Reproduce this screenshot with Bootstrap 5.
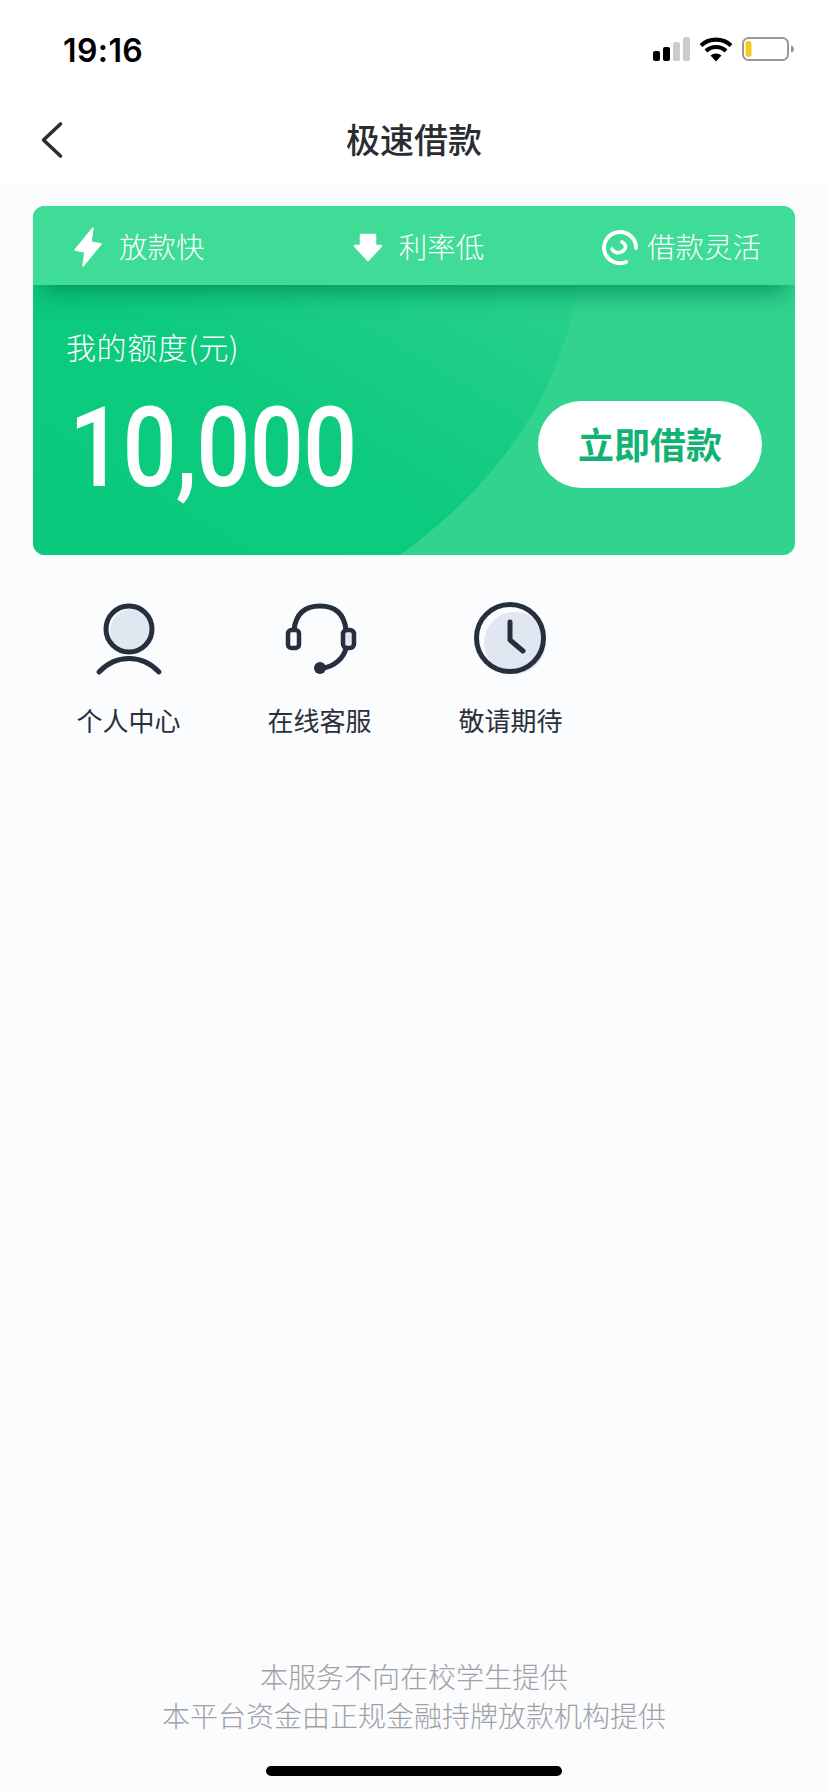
<!DOCTYPE html>
<html lang="zh-CN">
<head>
    <meta charset="UTF-8">
    <meta name="viewport" content="width=device-width, initial-scale=1.0">
    <title>极速借款</title>
    <link href="https://cdn.jsdelivr.net/npm/bootstrap@5.3.0/dist/css/bootstrap.min.css" rel="stylesheet">
    <style>
        body {
            margin: 0;
            background: #fafcfe;
            font-family: "Noto Sans CJK SC", "Noto Sans", sans-serif;
            color: #2b3038;
        }
        .page-wrap { min-height: 1792px; width: 828px; }
        .top-head { background: #fff; height: 184px; }
        .status-row { height: 98px; padding: 0 34px 0 63px; }
        .status-time { font-family: Inter, sans-serif; font-weight: 600; font-size: 32px; letter-spacing: .4px; color: #000; line-height: 1; padding-top: 4px; }
        .nav-row { height: 86px; padding-bottom: 4px; }
        .back-btn { left: 38px; top: 22px; }
        .page-title { font-size: 34px; font-weight: 500; line-height: 1; margin: 0; color: #2b2d30; }
        .quota-box { margin: 22px 33px 0; height: 349px; border-radius: 12px; overflow: hidden; background: #31d38f; color: #fff; }
        .quota-bg { left: 0; top: 0; }
        .perk-strip { height: 79px; background: #3fdc98; padding: 2px 34px 0 40px; box-shadow: 0 14px 24px -8px rgba(0, 140, 85, .9); }
        .perk-item { flex: 1 1 0; font-size: 28.5px; line-height: 1; white-space: nowrap; font-weight: 300; }
        .perk-mid { padding-left: 3px; }
        .quota-body { padding: 0 33px; height: 270px; }
        .quota-label { font-size: 30px; letter-spacing: .6px; line-height: 40px; padding-top: 41px; font-weight: 300; }
        .quota-num { font-family: Roboto, sans-serif; font-weight: 500; font-size: 111px; line-height: 1; margin: 27px 0 0 3px; transform: scaleX(.86); transform-origin: left center; letter-spacing: -1px; }
        .apply-btn { width: 224px; height: 87px; border-radius: 44px; background: #fff; color: #12b275; font-size: 36px; font-weight: 700; line-height: 1; margin-top: 116px; padding: 0 0 4px; }
        .tool-row { margin: 45px 0 0 33px; }
        .tool-item { width: 191px; }
        .tool-name { font-size: 26px; line-height: 36px; margin-top: 22px; color: #2b3038; font-weight: 400; }
        .foot-note { font-size: 28px; line-height: 39px; color: #9fa1a4; font-weight: 300; }
        .home-bar { width: 296px; height: 10px; border-radius: 5px; background: #000; margin: 31px auto 16px; }
    </style>
</head>
<body>
    <div class="page-wrap d-flex flex-column">
        <div class="top-head">
            <div class="status-row d-flex align-items-center justify-content-between">
                <span class="status-time">19:16</span>
                <svg width="142" height="26" viewBox="0 0 142 26">
                    <rect x="1" y="15" width="7" height="10" rx="2" fill="#000"/>
                    <rect x="11" y="11" width="7" height="14" rx="2" fill="#000"/>
                    <rect x="21" y="6" width="7" height="19" rx="2" fill="#ccc"/>
                    <rect x="31" y="1" width="7" height="24" rx="2" fill="#ccc"/>
                    <path d="M49 9.5a22 22 0 0 1 30 0" fill="none" stroke="#000" stroke-width="4.2"/>
                    <path d="M54 15a14.500 14.500 0 0 1 20 0" fill="none" stroke="#000" stroke-width="4.2"/>
                    <path d="M58.5 19.6a8 8 0 0 1 11 0L64 25.5z" fill="#000"/>
                    <rect x="91" y="2" width="45" height="22" rx="5.5" fill="#fff" stroke="#999" stroke-width="2"/>
                    <rect x="93.5" y="5" width="6" height="16" rx="3" fill="#f7c81f"/>
                    <path d="M139 9.5c2.5.6 3 2 3 3.500s-.5 3-3 3.500z" fill="#999"/>
                </svg>
            </div>
            <div class="nav-row position-relative d-flex align-items-center justify-content-center">
                <svg class="back-btn position-absolute" width="28" height="40" viewBox="0 0 28 40">
                    <path d="M22.500 4 5.500 20l17 16" fill="none" stroke="#2b2d30" stroke-width="3.600" stroke-linecap="round" stroke-linejoin="round"/>
                </svg>
                <h1 class="page-title">极速借款</h1>
            </div>
        </div>

        <div class="quota-box position-relative">
            <svg class="quota-bg position-absolute" width="762" height="349" viewBox="0 0 762 349">
                <defs>
                    <linearGradient id="quotaGrad" x1="0.15" y1="0.9" x2="0.95" y2="0.05">
                        <stop offset="0" stop-color="#0bc97d"/>
                        <stop offset=".35" stop-color="#0cca7e"/>
                        <stop offset="1" stop-color="#2fd28e"/>
                    </linearGradient>
                </defs>
                <path d="M367 349C455 285 525 200 545 80V0H0V349z" fill="url(#quotaGrad)"/>
            </svg>
            <div class="perk-strip position-relative d-flex align-items-center">
                <div class="perk-item d-flex align-items-center justify-content-start">
                    <svg width="30" height="42" viewBox="0 0 30 42" class="me-3">
                        <path d="M20 2 2 24l10 2-2 14L28 18l-10-2z" fill="#fff" stroke="#fff" stroke-width="1.500" stroke-linejoin="round"/>
                    </svg>
                    <span>放款快</span>
                </div>
                <div class="perk-item perk-mid d-flex align-items-center justify-content-center">
                    <svg width="30" height="30" viewBox="0 0 30 30" class="me-3">
                        <path d="M8 3h14v11h6L15 28 2 14h6z" fill="#fff" stroke="#fff" stroke-width="2.500" stroke-linejoin="round"/>
                    </svg>
                    <span>利率低</span>
                </div>
                <div class="perk-item d-flex align-items-center justify-content-end">
                    <svg width="38" height="36" viewBox="0 0 38 36" class="me-2">
                        <path d="M35 19A16 15.500 0 1 0 25 33" fill="none" stroke="#fff" stroke-width="4" stroke-linecap="round"/>
                        <path d="M11 20c2 4 7 5 11 2s3-7-1-9" fill="none" stroke="#fff" stroke-width="3.600" stroke-linecap="round"/>
                    </svg>
                    <span>借款灵活</span>
                </div>
            </div>
            <div class="quota-body position-relative d-flex justify-content-between">
                <div>
                    <div class="quota-label">我的额度(元)</div>
                    <div class="quota-num">10,000</div>
                </div>
                <button class="apply-btn btn border-0 flex-shrink-0" type="button">立即借款</button>
            </div>
        </div>

        <div class="tool-row d-flex">
            <div class="tool-item text-center">
                <svg width="80" height="80" viewBox="0 0 80 80" class="d-block mx-auto">
                    <circle cx="43" cy="31" r="22" fill="#e1e7f0"/>
                    <circle cx="40" cy="29" r="23" fill="none" stroke="#262f3d" stroke-width="5"/>
                    <path d="M10 72c17-18 43-18 60 0" fill="none" stroke="#262f3d" stroke-width="5" stroke-linecap="round"/>
                </svg>
                <div class="tool-name">个人中心</div>
            </div>
            <div class="tool-item text-center">
                <svg width="80" height="80" viewBox="0 0 80 80" class="d-block mx-auto">
                    <rect x="62" y="29" width="11" height="19" rx="4" fill="#e1e7f0"/>
                    <path d="M14 30C16 12 27 6 40 6s24 6 26 24" fill="none" stroke="#262f3d" stroke-width="5"/>
                    <rect x="8" y="30" width="11" height="18" rx="3.500" fill="none" stroke="#262f3d" stroke-width="4.500"/>
                    <rect x="63" y="30" width="11" height="18" rx="4" fill="none" stroke="#262f3d" stroke-width="4.500"/>
                    <path d="M66 48c-2 10-12 19-24 20" fill="none" stroke="#262f3d" stroke-width="5"/>
                    <circle cx="40" cy="68" r="6" fill="#262f3d"/>
                </svg>
                <div class="tool-name">在线客服</div>
            </div>
            <div class="tool-item text-center">
                <svg width="80" height="80" viewBox="0 0 80 80" class="d-block mx-auto">
                    <circle cx="44" cy="43" r="31" fill="#e1e7f0"/>
                    <circle cx="39" cy="38" r="33.500" fill="none" stroke="#262f3d" stroke-width="5"/>
                    <path d="M39 22v18l13 11" fill="none" stroke="#262f3d" stroke-width="5" stroke-linecap="round" stroke-linejoin="round"/>
                </svg>
                <div class="tool-name">敬请期待</div>
            </div>
        </div>

        <div class="foot-note text-center mt-auto">
            <div>本服务不向在校学生提供</div>
            <div>本平台资金由正规金融持牌放款机构提供</div>
        </div>
        <div class="home-bar"></div>
    </div>
    <script src="https://cdn.jsdelivr.net/npm/bootstrap@5.3.0/dist/js/bootstrap.bundle.min.js"></script>
</body>
</html>
